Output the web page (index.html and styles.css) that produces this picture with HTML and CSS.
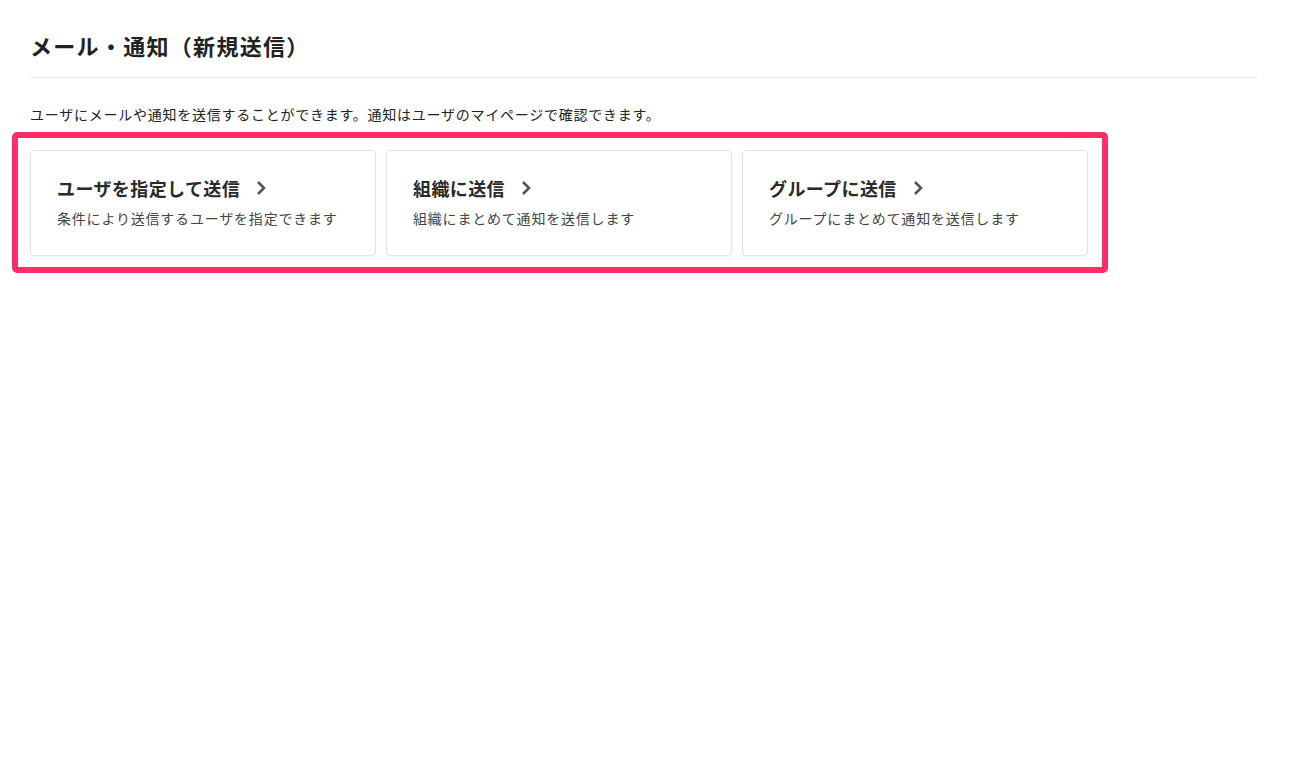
FILE: index.html
```html
<!DOCTYPE html>
<html lang="ja">
<head>
  <meta charset="UTF-8"/>
  <title>メール・通知（新規送信）</title>
  <meta name="viewport" content="width=device-width, initial-scale=1.0"/>
  <link rel="stylesheet" href="styles.css">
</head>
<body>

  <h1>メール・通知（新規送信）</h1>

  <p class="lead">ユーザにメールや通知を送信することができます。通知はユーザのマイページで確認できます。</p>

  <div class="highlight">
    <a class="card" href="#">
      <span class="card-title">ユーザを指定して送信
        <svg class="chev" viewBox="0 0 10 16" width="10" height="16"><path d="M2 2 L8 8 L2 14" fill="none" stroke="#555" stroke-width="2.6"/></svg>
      </span>
      <span class="card-desc">条件により送信するユーザを指定できます</span>
    </a>
    <a class="card" href="#">
      <span class="card-title">組織に送信
        <svg class="chev" viewBox="0 0 10 16" width="10" height="16"><path d="M2 2 L8 8 L2 14" fill="none" stroke="#555" stroke-width="2.6"/></svg>
      </span>
      <span class="card-desc">組織にまとめて通知を送信します</span>
    </a>
    <a class="card" href="#">
      <span class="card-title">グループに送信
        <svg class="chev" viewBox="0 0 10 16" width="10" height="16"><path d="M2 2 L8 8 L2 14" fill="none" stroke="#555" stroke-width="2.6"/></svg>
      </span>
      <span class="card-desc">グループにまとめて通知を送信します</span>
    </a>
  </div>

</body>
</html>
```

FILE: styles.css
```css
body {
  font-family: "Noto Sans CJK JP", "Noto Sans", sans-serif;
  margin: 0;
  padding: 27px 34px 0 30px;
  color: #222;
  background: #fff;
}
h1 {
  font-size: 22px;
  font-weight: bold;
  letter-spacing: 1.3px;
  line-height: 36px;
  margin: 0;
  padding-bottom: 14px;
  border-bottom: 1px solid #e6e6e6;
}
.lead {
  font-size: 14px;
  letter-spacing: 0.75px;
  line-height: 20px;
  margin: 26px 0 8px;
  color: #222;
}
.highlight {
  display: inline-flex;
  gap: 10px;
  margin-left: -18px;
  padding: 12px 14px 11px 12px;
  border: 6px solid #ff2c6a;
  border-radius: 5px;
}
.card {
  display: flex;
  flex-direction: column;
  width: 346px;
  height: 106px;
  box-sizing: border-box;
  padding: 24px 26px 0;
  border: 1px solid #e3e3e3;
  border-radius: 4px;
  box-shadow: 0 1px 2px rgba(0, 0, 0, 0.06);
  text-decoration: none;
  color: #222;
}
.card-title {
  display: flex;
  align-items: center;
  gap: 16px;
  font-size: 18px;
  font-weight: bold;
  letter-spacing: 0.4px;
  line-height: 26px;
  color: #2a2a2a;
}
.card-desc {
  margin-top: 7px;
  font-size: 14px;
  letter-spacing: 0.8px;
  line-height: 20px;
  color: #444;
}
```
